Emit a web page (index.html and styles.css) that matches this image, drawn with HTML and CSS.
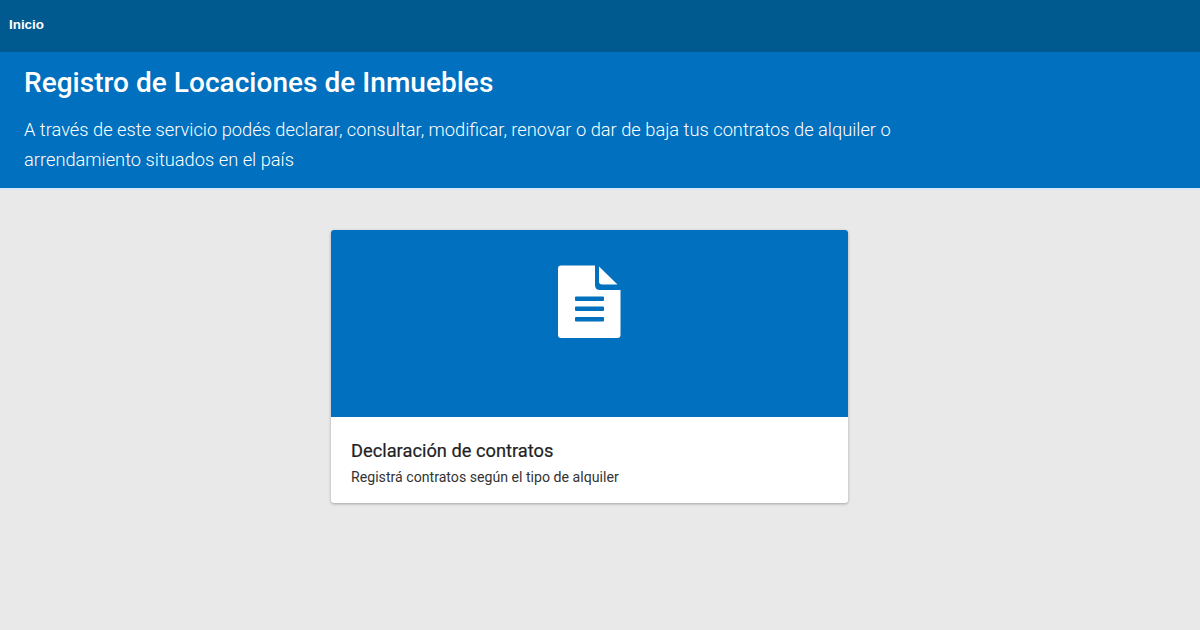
FILE: index.html
```html
<!DOCTYPE html>
<html lang="es">
<head>
<meta charset="utf-8">
<title>Registro de Locaciones de Inmuebles</title>
<link rel="stylesheet" href="styles.css">
</head>
<body>
<nav class="topbar"><a class="topbar-link">Inicio</a></nav>
<header class="hero">
  <h1 class="hero-title">Registro de Locaciones de Inmuebles</h1>
  <p class="hero-text">A través de este servicio podés declarar, consultar, modificar, renovar o dar de baja tus contratos de alquiler o arrendamiento situados en el país</p>
</header>
<main class="content">
  <article class="card">
    <div class="card-media">
      <svg class="doc-icon" width="63" height="73" viewBox="0 0 63 73" aria-hidden="true">
        <path fill="#fff" d="M3 0.500H37V20Q37 25 42 25H62.500V70Q62.500 73 59.500 73H3Q0 73 0 70V3.500Q0 0.500 3 0.500Z"/>
        <path fill="#fff" d="M41 1.500L59.500 19.500H44Q41 19.500 41 16.500Z"/>
        <rect x="17" y="31.500" width="29" height="4.500" rx="1" fill="#0070bf"/>
        <rect x="17" y="41.500" width="29" height="4.500" rx="1" fill="#0070bf"/>
        <rect x="17" y="52" width="29" height="4.500" rx="1" fill="#0070bf"/>
      </svg>
    </div>
    <div class="card-body">
      <h2 class="card-title">Declaración de contratos</h2>
      <p class="card-text">Registrá contratos según el tipo de alquiler</p>
    </div>
  </article>
</main>
</body>
</html>
```
FILE: styles.css
```css
* { box-sizing: border-box; }
html, body { margin: 0; height: 100%; }
body {
  background: #e9e9e9;
  font-family: Roboto, "Liberation Sans", sans-serif;
  overflow: hidden;
}
.topbar {
  height: 52px;
  background: #005a8f;
  display: flex;
  align-items: center;
  padding: 0 0 4px 9px;
}
.topbar-link {
  color: #fff;
  font-family: "Liberation Sans", Arial, sans-serif;
  font-size: 13.4px;
  font-weight: 700;
}
.hero {
  height: 138px;
  background: #0070bf;
  border-bottom: 2px solid #d6e7f5;
  color: #fff;
  padding: 14px 24px 0;
}
.hero-title {
  margin: 0;
  font-size: 28px;
  line-height: 34px;
  font-weight: 500;
  letter-spacing: .03px;
}
.hero-text {
  margin: 15px 0 0;
  width: 900px;
  font-size: 18.27px;
  line-height: 30px;
  font-weight: 300;
}
.content {
  display: flex;
  justify-content: center;
  padding: 40px 21px 0 0;
}
.card {
  width: 517px;
  height: 273px;
  background: #fff;
  border-radius: 3px;
  overflow: hidden;
  box-shadow: 0 1px 3px rgba(0,0,0,.3);
}
.card-media {
  height: 187px;
  background: #0070bf;
  display: flex;
  justify-content: center;
  padding: 35px 0 0 0;
}
.doc-icon { display: block; }
.card-body { padding: 23px 20px 0; }
.card-title {
  margin: 0;
  font-size: 18.27px;
  line-height: 22px;
  font-weight: 400;
  color: #222;
  -webkit-text-stroke: .2px #222;
}
.card-text {
  margin: 5px 0 0;
  font-size: 14.15px;
  line-height: 20px;
  color: #333;
}
```
